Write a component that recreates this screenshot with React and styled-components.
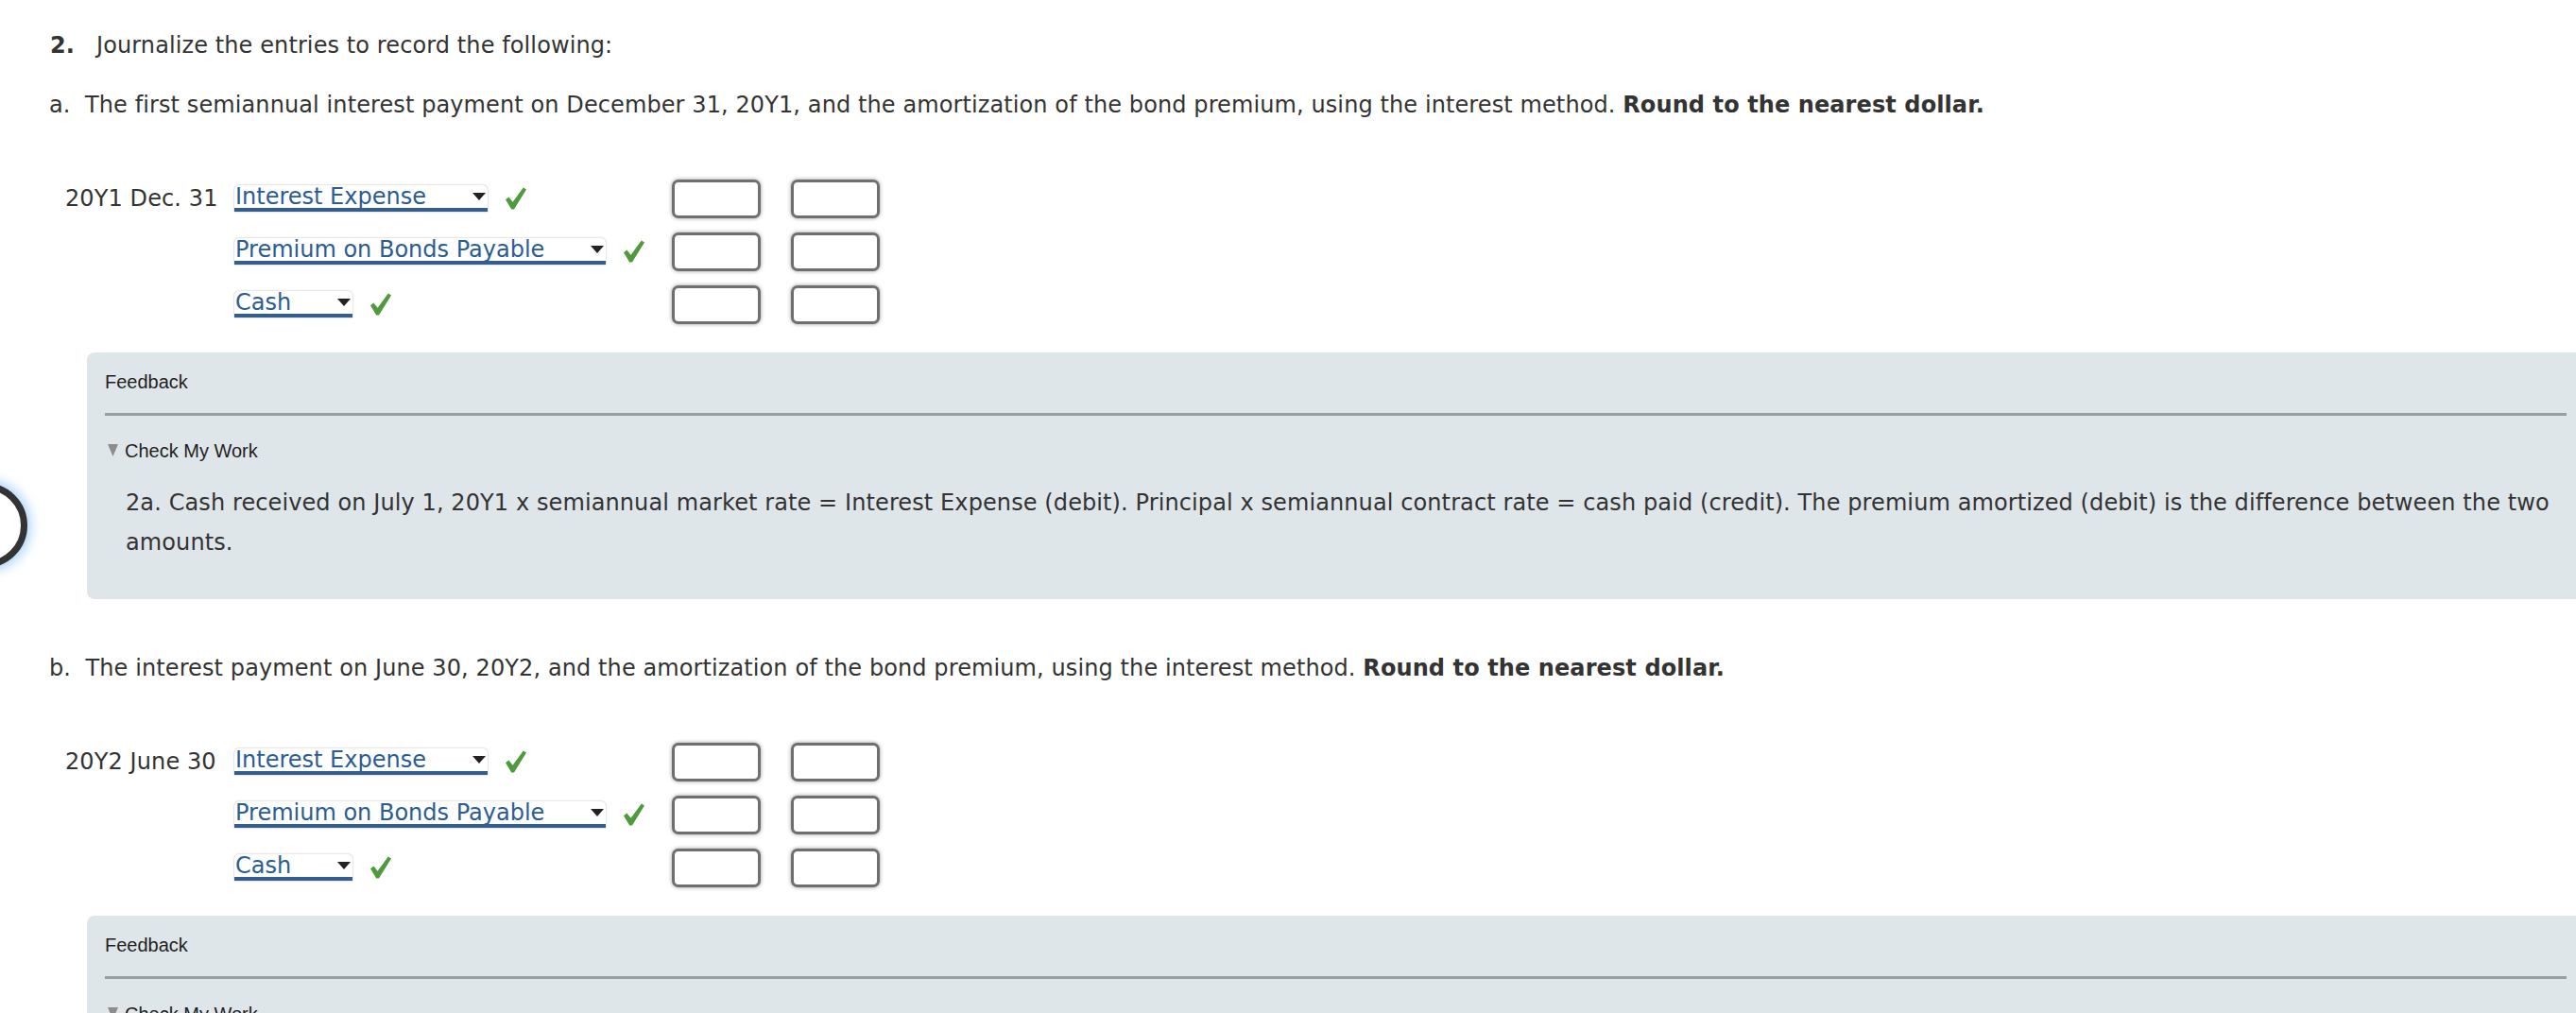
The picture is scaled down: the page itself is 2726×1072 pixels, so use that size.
import styled, { createGlobalStyle } from "styled-components";

const GlobalStyle = createGlobalStyle`
  html, body {
    margin: 0;
    padding: 0;
    background: #fff;
    overflow-x: hidden;
  }
  body {
    font-family: "DejaVu Sans", Verdana, sans-serif;
    color: #333;
  }
`;

const Page = styled.div`
  position: relative;
  padding: 30px 0 0 52px;
  font-size: 24px;
  line-height: 36px;
  letter-spacing: 0.1px;
`;

const Heading = styled.p`
  margin: 0 0 27px;
`;

const QuestionNumber = styled.b`
  display: inline-block;
  margin: 0 23px 0 1px;
`;

const Prompt = styled.p`
  margin: 0 0 60px;
`;

const Journal = styled.div`
  display: flex;
  flex-direction: column;
  gap: 14px;
  margin: 0 0 30px 17px;
`;

const JournalRow = styled.div`
  display: flex;
  align-items: center;
  height: 42px;
`;

const DateCell = styled.div`
  width: 179px;
  flex: none;
  white-space: nowrap;
`;

const AccountCell = styled.div`
  width: 463px;
  flex: none;
  display: flex;
  align-items: center;
  gap: 19px;
`;

const AccountSelect = styled.div`
  display: flex;
  align-items: flex-start;
  gap: 49px;
  box-sizing: border-box;
  height: 28px;
  padding: 0 2px 0 1px;
  background: #fff;
  color: #2b5c92;
  font-size: 24px;
  line-height: 24px;
  letter-spacing: 0;
  white-space: nowrap;
  border-bottom: 4px solid #345f8d;
  border-radius: 5px 5px 0 0;
  box-shadow: 0 0 2px rgba(0, 0, 0, 0.35);
`;

const SelectArrow = styled.svg`
  flex: none;
  margin-top: 8px;
`;

const Amounts = styled.div`
  display: flex;
  gap: 32px;
`;

const AmountInput = styled.div`
  box-sizing: border-box;
  width: 94px;
  height: 41px;
  background: #fff;
  border: 3px solid #6f6f6f;
  border-radius: 7px;
  box-shadow: 0 0 4px rgba(0, 0, 0, 0.4);
`;

const Panel = styled.div`
  margin: 0 -9px 55px 40px;
  padding: 19px 19px 39px;
  background: #dfe6ea;
  border-radius: 8px;
`;

const PanelLabel = styled.div`
  display: flex;
  align-items: flex-start;
  gap: 7px;
  font-family: "Liberation Sans", Arial, sans-serif;
  font-size: 20px;
  line-height: 24px;
  letter-spacing: 0;
  color: #1f1f1f;
`;

const Rule = styled.hr`
  margin: 21px 0 25px;
  height: 0;
  border: 0;
  border-top: 3px solid #999ea2;
`;

const Toggle = styled.svg`
  flex: none;
  margin: 5px 0 0 3px;
`;

const FeedbackText = styled.p`
  margin: 22px 0 0 22px;
  font-size: 24px;
  line-height: 42px;
  color: #333;
`;

const SideButton = styled.div`
  position: absolute;
  left: -61px;
  top: 511px;
  box-sizing: border-box;
  width: 90px;
  height: 90px;
  border: 7px solid #333;
  border-radius: 50%;
  background: #fff;
  box-shadow: 0 0 12px 4px rgba(110, 180, 255, 0.55);
  display: flex;
  align-items: center;
  justify-content: flex-end;
  padding-right: 22px;
`;

const SideDot = styled.div`
  width: 10px;
  height: 12px;
  border-radius: 3px;
  background: #d6d6d6;
`;

function Check() {
  return (
    <svg width="22" height="24" viewBox="0 0 22 24">
      <path d="M0 13.2 L3.4 10.4 L7.6 15.8 L18.8 0.4 L22 2.6 L9 23.6 L6.2 23.6 Z" fill="#4e9a3d" />
    </svg>
  );
}

const sections = [
  {
    letter: "a",
    prompt:
      "The first semiannual interest payment on December 31, 20Y1, and the amortization of the bond premium, using the interest method.",
    date: "20Y1 Dec. 31",
    feedback:
      "2a. Cash received on July 1, 20Y1 x semiannual market rate = Interest Expense (debit). Principal x semiannual contract rate = cash paid (credit). The premium amortized (debit) is the difference between the two amounts.",
  },
  {
    letter: "b",
    prompt:
      "The interest payment on June 30, 20Y2, and the amortization of the bond premium, using the interest method.",
    date: "20Y2 June 30",
    feedback:
      "2b. Carrying amount of the bonds on January 1, 20Y2 x semiannual market rate = Interest Expense (debit). Principal x semiannual contract rate = cash paid (credit). The premium amortized (debit) is the difference between the two amounts.",
  },
];

const accounts = ["Interest Expense", "Premium on Bonds Payable", "Cash"];

function JournalEntry({ date }) {
  return (
    <Journal>
      {accounts.map((account, i) => (
        <JournalRow key={account}>
          <DateCell>{i === 0 ? date : ""}</DateCell>
          <AccountCell>
            <AccountSelect>
              <span>{account}</span>
              <SelectArrow width="14" height="8" viewBox="0 0 14 8">
                <path d="M0 0 H14 L7 8 Z" fill="#222" />
              </SelectArrow>
            </AccountSelect>
            <Check />
          </AccountCell>
          <Amounts>
            <AmountInput />
            <AmountInput />
          </Amounts>
        </JournalRow>
      ))}
    </Journal>
  );
}

export default function App() {
  return (
    <>
      <GlobalStyle />
      <Page>
        <Heading>
          <QuestionNumber>2.</QuestionNumber>Journalize the entries to record the following:
        </Heading>
        {sections.map((s) => (
          <section key={s.letter}>
            <Prompt>
              {s.letter}.&nbsp; {s.prompt} <b>Round to the nearest dollar.</b>
            </Prompt>
            <JournalEntry date={s.date} />
            <Panel>
              <PanelLabel>Feedback</PanelLabel>
              <Rule />
              <PanelLabel>
                <Toggle width="11" height="13" viewBox="0 0 11 13">
                  <path d="M0 0 H11 L5.5 13 Z" fill="#8d8d8d" />
                </Toggle>
                Check My Work
              </PanelLabel>
              <FeedbackText>{s.feedback}</FeedbackText>
            </Panel>
          </section>
        ))}
        <SideButton>
          <SideDot />
        </SideButton>
      </Page>
    </>
  );
}
